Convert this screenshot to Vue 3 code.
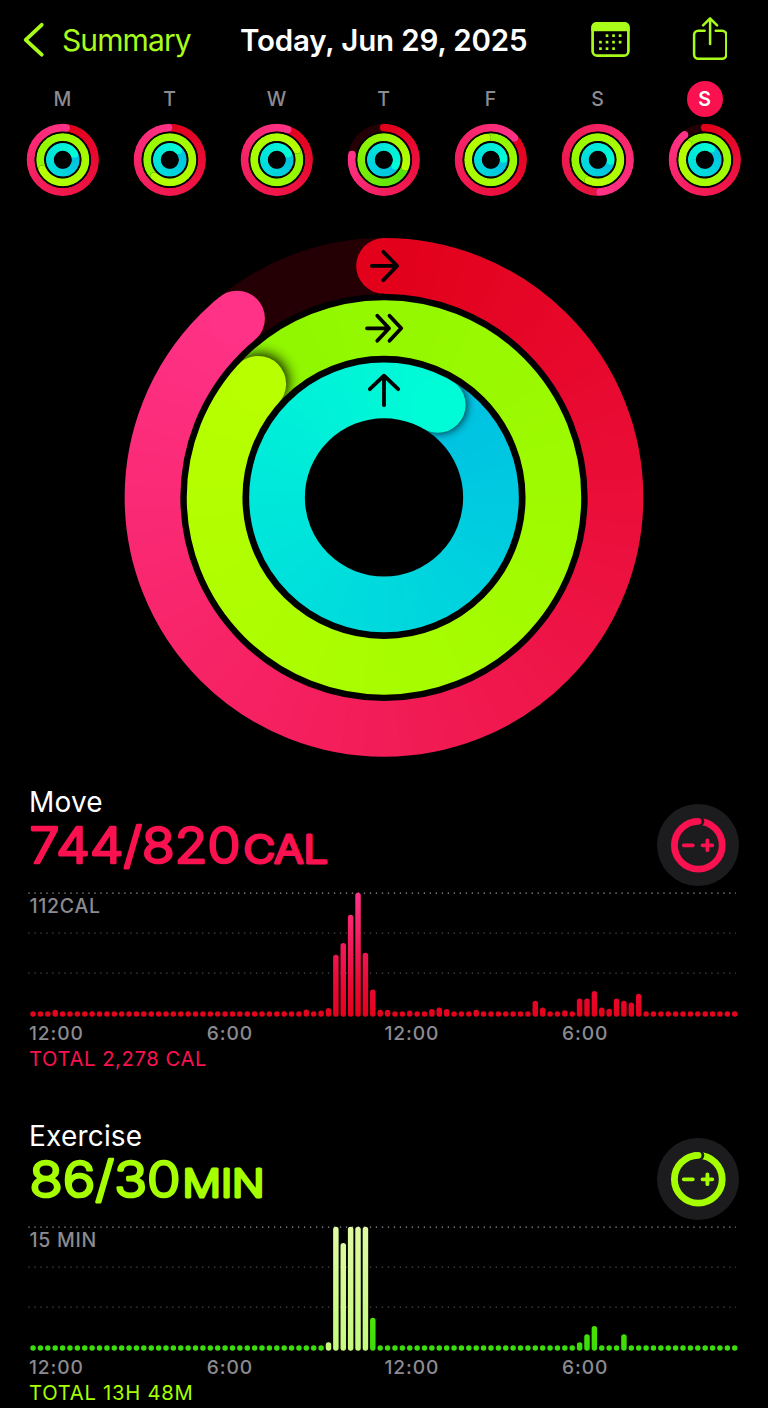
<script setup>
import { h } from 'vue'

const RED = [[226, 0, 26], [255, 50, 135]]
const GREEN = [[143, 247, 0], [184, 255, 0]]
const LIME = [[84, 226, 10], [184, 255, 0]]
const CYAN = [[0, 192, 226], [0, 252, 214]]

const polar = (r, deg) => {
  const a = (deg - 90) * Math.PI / 180
  return [r * Math.cos(a), r * Math.sin(a)]
}

const arc = (r, from, to) => {
  const [x1, y1] = polar(r, from)
  const [x2, y2] = polar(r, to)
  return `M${x1} ${y1}A${r} ${r} 0 0 1 ${x2} ${y2}`
}

const mix = ([a, b], t) => `rgb(${a.map((v, i) => Math.round(v + (b[i] - v) * t)).join()})`

// One activity ring: an "open" ring starts at 12 o'clock, the others overlap themselves
const drawRing = (ring, id, width) => {
  const { r, end, colors, open, blur } = ring
  const start = open ? 0 : end - 360
  const steps = r > 50 ? 120 : 48
  const step = (end - start) / steps
  const split = steps * 0.75
  // segments are drawn a bit wide, the mask gives them a clean edge
  const segments = Array.from({ length: steps }, (_, i) => h('path', {
    d: arc(r, start + i * step, start + (i + 1) * step + (i < steps - 1 ? step / 2 : 0)),
    stroke: mix(colors, i / steps),
    'stroke-width': width * 1.06,
    fill: 'none'
  }))
  const [cx, cy] = polar(r, end)
  const [sx, sy] = polar(r, end + (open ? 0 : blur / r * 20))
  const nodes = []
  if (open) {
    nodes.push(h('circle', { r, fill: 'none', stroke: '#240004', 'stroke-width': width * 1.06 }))
    nodes.push(h('circle', { cx: 0, cy: -r, r: width / 2, fill: mix(colors, 0) }))
  }
  nodes.push(...segments.slice(0, split))
  if (!open) {
    nodes.push(h('filter', { id: id + 'f', x: '-60%', y: '-60%', width: '220%', height: '220%' }, [
      h('feGaussianBlur', { stdDeviation: blur })
    ]))
    nodes.push(h('circle', { cx: sx, cy: sy, r: width / 2, fill: '#000', opacity: ring.shade, filter: `url(#${id}f)` }))
  }
  nodes.push(...segments.slice(split))
  nodes.push(h('circle', { cx, cy, r: width / 2, fill: mix(colors, 1) }))
  const box = r + width
  return [
    h('mask', { id: id + 'm', maskUnits: 'userSpaceOnUse', x: -box, y: -box, width: box * 2, height: box * 2 }, [
      h('circle', { r, fill: 'none', stroke: '#fff', 'stroke-width': width })
    ]),
    h('g', { mask: `url(#${id}m)` }, nodes)
  ]
}

const Rings = (props) => h('svg', { viewBox: props.box }, props.rings.map((ring, i) =>
  h('g', drawRing(ring, props.name + i, props.width))
))
Rings.props = ['rings', 'name', 'width', 'box']

const bigRings = [
  { r: 231.5, end: 320.6, colors: RED, open: true },
  { r: 169.4, end: 312.1, colors: GREEN, blur: 7, shade: 1 },
  { r: 107, end: 30.2, colors: CYAN, blur: 4, shade: 0.75 }
]

const week = [
  ['M', 6, 245, 63],
  ['T', -2, 223, 42],
  ['W', 20, 63, 62],
  ['T', 279, 108, 118],
  ['F', 47, -10, 86],
  ['S', 176, 204, 95],
  ['S', 320.6, 312.1, 30.2]
].map(([label, move, exercise, stand], i) => ({
  label,
  selected: i === 6,
  rings: [
    { r: 32.2, end: move, colors: i === 5 ? [[232, 18, 60], RED[1]] : RED, open: i === 3 || i === 6, blur: 0.7, shade: 0.45 },
    { r: 22.6, end: exercise, colors: i === 3 ? LIME : GREEN, blur: 0.6, shade: 0.5 },
    { r: 12.9, end: stand, colors: CYAN, blur: 0.5, shade: 0.2 }
  ]
}))

const fill = (values) => Array.from({ length: 96 }, (_, i) => values[i] || 5.5)

const sections = [
  {
    key: 'move',
    title: 'Move',
    value: '744/820',
    unit: 'CAL',
    valueWidth: 211,
    unitX: 214.5,
    unitWidth: 84.5,
    max: '112CAL',
    total: 'TOTAL 2,278 CAL',
    stops: ['#e4021b', '#ea0b38', '#ff328a'],
    pale: [],
    bars: fill({
      3: 7, 37: 7.3, 39: 6.2, 40: 8.7, 41: 62, 42: 73.7, 43: 102, 44: 124, 45: 64, 46: 27.3, 47: 7, 48: 7,
      51: 6.4, 54: 7.7, 55: 9.3, 56: 7.7, 60: 7, 68: 16, 69: 9.3, 72: 6.6, 74: 18.3, 75: 18.3, 76: 25.7,
      77: 9.3, 78: 8, 79: 18.3, 80: 16, 81: 14.3, 82: 23
    })
  },
  {
    key: 'exercise',
    title: 'Exercise',
    value: '86/30',
    unit: 'MIN',
    valueWidth: 151,
    unitX: 153.5,
    unitWidth: 82,
    max: '15 MIN',
    total: 'TOTAL 13H 48M',
    stops: ['#3bdc0c', '#50e600', '#a6ff00'],
    pale: [40, 41, 42, 43, 44, 45],
    bars: fill({ 40: 8.5, 41: 124, 42: 107.7, 43: 124, 44: 124, 45: 124, 46: 33, 74: 8.5, 75: 16.5, 76: 24.7, 80: 16.5 })
  }
]

const hours = ['12:00', '6:00', '12:00', '6:00']
const dots = [[1, 0], [2, 0], [3, 0], [0, 1], [1, 1], [2, 1], [3, 1], [0, 2], [1, 2], [2, 2]]
</script>

<template>
  <div class="screen">
    <header class="nav">
      <div class="back">
        <svg width="24" height="38" viewBox="0 0 24 38">
          <path d="M19.7 3.8 3.7 18.9l16 14.8" />
        </svg>
        <span>Summary</span>
      </div>
      <h1>Today, Jun 29, 2025</h1>
      <div class="actions">
        <svg width="40" height="46" viewBox="0 0 40 46">
          <rect x="2.6" y="8.3" width="35.8" height="32.4" rx="4.5" class="line" />
          <path d="M1.3 16.2v-4a5 5 0 0 1 5-5.1h28.4a5 5 0 0 1 5 5.1v4z" class="solid" />
          <rect v-for="([x, y], i) in dots" :key="i" :x="9.1 + x * 6.55" :y="19.3 + y * 6.5" width="2.7" height="2.7" class="solid" />
        </svg>
        <svg width="36" height="46" viewBox="0 0 36 46">
          <path class="line thin" d="M13.6 15.7H7.3A4.2 4.2 0 0 0 3.1 19.9v19.7A4.2 4.2 0 0 0 7.3 43.8h23.8a4.2 4.2 0 0 0 4.2-4.2V19.9A4.2 4.2 0 0 0 31.1 15.7h-6.4M19.100 29V4M12.100 10.400l7-7 7 7" />
        </svg>
      </div>
    </header>

    <div class="week">
      <div v-for="(day, i) in week" :key="i" class="day">
        <span class="label" :class="{ selected: day.selected }">{{ day.label }}</span>
        <Rings class="mini" :rings="day.rings" :name="'day' + i" :width="7.8" box="-36.8 -36.8 73 73" />
      </div>
    </div>

    <div class="hero">
      <Rings class="big" :rings="bigRings" name="big" :width="55.7" box="-260 -260.4 520 520" />
      <svg class="glyphs" viewBox="-260 -260.4 520 520">
        <path d="M-12.2-231.5H12.9M-.7-245.6 13-231.5-.7-217.2" />
        <path d="M-17-169.1H5M-6.7-181.7 5-169.1-6.7-156.6M5.5-181.7 17.2-169.1 5.5-156.6" />
        <path d="M0-92.2V-121.5M-14.2-108.2 0-121.7 14.2-108.2" />
      </svg>
    </div>

    <section v-for="s in sections" :key="s.key" class="section" :class="s.key">
      <div class="top">
        <div>
          <h2>{{ s.title }}</h2>
          <svg class="value" width="320" height="74" viewBox="0 0 320 74">
            <text x="0.5" y="45.3" class="num" :textLength="s.valueWidth" lengthAdjust="spacingAndGlyphs">{{ s.value }}</text>
            <text :x="s.unitX" y="45.3" class="unit" :textLength="s.unitWidth" lengthAdjust="spacingAndGlyphs">{{ s.unit }}</text>
          </svg>
        </div>
        <div class="adjust">
          <svg width="56" height="56" viewBox="-28.3 -28.3 56 56">
            <circle r="23.9" class="goal" />
            <circle cx="1.3" cy="-23.9" r="4.7" class="gap" />
            <path d="M-3-23.7A23.9 23.9 0 0 1 -.2-23.9" class="end" />
            <path d="M-14.5 0H-5.5M4.2 0h9.8M9.1-4.9v9.8" class="sign" />
          </svg>
        </div>
      </div>
      <div class="chart">
        <svg class="plot" viewBox="0 0 710 125">
          <linearGradient :id="s.key + 'bar'" gradientUnits="userSpaceOnUse" x1="0" y1="125" x2="0" y2="0">
            <stop offset="0" :stop-color="s.stops[0]" />
            <stop offset="0.3" :stop-color="s.stops[1]" />
            <stop offset="1" :stop-color="s.stops[2]" />
          </linearGradient>
          <linearGradient :id="s.key + 'pale'" gradientUnits="userSpaceOnUse" x1="0" y1="125" x2="0" y2="0">
            <stop offset="0" stop-color="#c6fa7c" />
            <stop offset="1" stop-color="#dffaa4" />
          </linearGradient>
          <path class="rule bright" d="M-.6 1.100H707" />
          <path class="rule" d="M-.6 41.100H707M-.6 81.100H707" />
          <rect
            v-for="(b, i) in s.bars"
            :key="i"
            :x="1.3 + i * 7.386"
            :y="124.8 - b"
            width="5.5"
            :height="b"
            rx="2.75"
            :fill="`url(#${s.key}${s.pale.includes(i) ? 'pale' : 'bar'})`"
          />
        </svg>
        <span class="max">{{ s.max }}</span>
      </div>
      <div class="hours">
        <span v-for="(t, i) in hours" :key="i">{{ t }}</span>
      </div>
      <div class="total">{{ s.total }}</div>
    </section>
  </div>
</template>

<style>
body {
  background: #000;
}
</style>

<style scoped>
.screen {
  width: 768px;
  height: 1408px;
  overflow: hidden;
  background: #000;
  color: #fff;
  font-family: Inter, "Liberation Sans", sans-serif;
}

.nav {
  height: 80px;
  display: grid;
  grid-template-columns: 240px 1fr 178px;
  align-items: center;
}

.back {
  display: flex;
  align-items: center;
  gap: 16px;
  padding-left: 22px;
  color: #a9fb1a;
  font-size: 30px;
  letter-spacing: -0.9px;
}

.back path {
  fill: none;
  stroke: #a9fb1a;
  stroke-width: 3.8;
  stroke-linecap: round;
  stroke-linejoin: round;
}

.back span,
h1 {
  margin: -1px 0 0;
}

h1 {
  font-size: 29.5px;
  font-weight: 600;
  letter-spacing: -0.16px;
  white-space: nowrap;
}

.actions {
  display: flex;
  gap: 61px;
  margin-top: -4px;
}

.line {
  fill: none;
  stroke: #a9fb1a;
  stroke-width: 2.7;
}

.thin {
  stroke-width: 2.5;
  stroke-linecap: round;
  stroke-linejoin: round;
}

.solid {
  fill: #a9fb1a;
}

.week {
  display: flex;
  justify-content: space-between;
  padding: 0 27px 0 26px;
}

.day {
  display: flex;
  flex-direction: column;
  align-items: center;
  width: 73px;
}

.label {
  width: 36px;
  line-height: 36px;
  margin-top: 1px;
  border-radius: 50%;
  text-align: center;
  font-size: 19.5px;
  font-weight: 500;
  color: #8b8b90;
}

.label.selected {
  background: #fa114f;
  color: #fff;
  font-weight: 600;
}

.mini {
  width: 73px;
  height: 73px;
  margin-top: 6px;
}

.hero {
  position: relative;
  width: 520px;
  height: 520px;
  margin: 41px auto 0;
}

.big,
.glyphs {
  width: 520px;
  height: 520px;
  display: block;
}

.glyphs {
  position: absolute;
  top: 0;
  left: 0;
  fill: none;
  stroke: #000;
  stroke-width: 3.8;
  stroke-linecap: round;
  stroke-linejoin: round;
}

.section {
  height: 333.7px;
  padding: 0 29px;
  box-sizing: border-box;
}

.move {
  --tint: #fa114f;
  margin-top: 27px;
}

.exercise {
  --tint: #a6ff00;
}

.top {
  display: flex;
  justify-content: space-between;
  height: 108px;
}

h2 {
  margin: 0;
  font-size: 28px;
  line-height: 37px;
  height: 34px;
  font-weight: 400;
  letter-spacing: 0.2px;
}

.value {
  display: block;
  overflow: visible;
  fill: var(--tint);
  stroke: var(--tint);
  stroke-width: 2.7;
  stroke-linejoin: round;
}

.num {
  font-size: 49.6px;
  font-weight: 300;
}

.unit {
  font-size: 38.5px;
  font-weight: 300;
  stroke-width: 3;
}

.adjust {
  width: 82px;
  height: 82px;
  margin-top: 20px;
  display: flex;
  align-items: center;
  justify-content: center;
  border-radius: 50%;
  background: #1c1c1e;
}

.goal {
  fill: none;
  stroke: var(--tint);
  stroke-width: 6.8;
}

.gap {
  fill: #1c1c1e;
}

.end {
  fill: none;
  stroke: var(--tint);
  stroke-width: 6.8;
  stroke-linecap: round;
}

.sign {
  fill: none;
  stroke: var(--tint);
  stroke-width: 3.8;
  stroke-linecap: round;
}

.chart {
  position: relative;
  height: 125px;
}

.plot {
  display: block;
  width: 710px;
  height: 125px;
  overflow: visible;
}

.rule {
  stroke: #4c4c4e;
  stroke-width: 1.3;
  stroke-dasharray: 1.3 4.69;
}

.rule.bright {
  stroke: #98989a;
}

.max {
  position: absolute;
  top: 2px;
  left: 0.5px;
  font-size: 19.5px;
  line-height: 24px;
  font-weight: 500;
  letter-spacing: 0.7px;
  color: #8b8b90;
}

.hours {
  display: grid;
  grid-template-columns: repeat(4, 177.7px);
  padding-top: 4px;
  font-size: 19.2px;
  line-height: 25px;
  font-weight: 500;
  letter-spacing: 0.9px;
  color: #8b8b90;
}

.total {
  font-size: 20.2px;
  line-height: 25px;
  letter-spacing: 0.6px;
  color: var(--tint);
}

.exercise .total {
  letter-spacing: 0.75px;
}
</style>
